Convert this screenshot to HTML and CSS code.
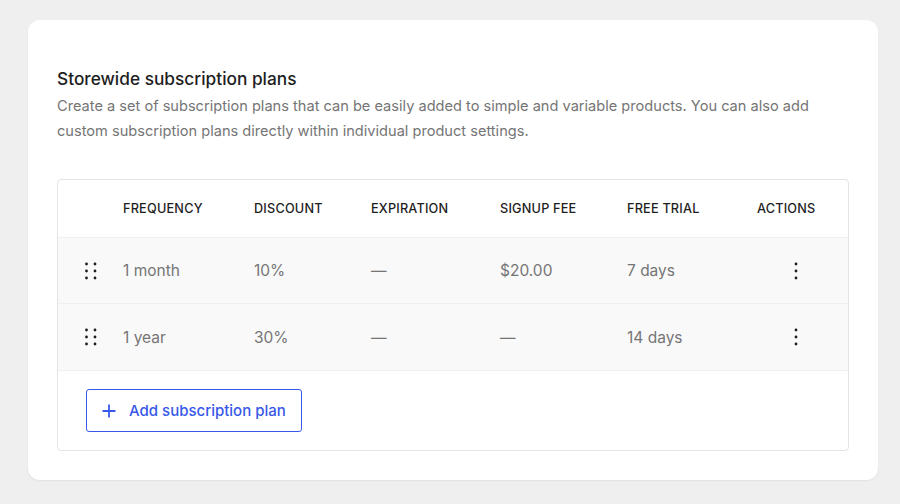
FILE: index.html
```html
<!DOCTYPE html>
<html lang="en">
<head>
<meta charset="utf-8">
<title>Storewide subscription plans</title>
<link rel="stylesheet" href="styles.css">
</head>
<body>
<div class="card">
  <h2 class="title">Storewide subscription plans</h2>
  <p class="desc">Create a set of subscription plans that can be easily added to simple and variable products. You can also add custom subscription plans directly within individual product settings.</p>
  <div class="table">
    <div class="row head">
      <div class="cell"></div>
      <div class="cell">Frequency</div>
      <div class="cell">Discount</div>
      <div class="cell">Expiration</div>
      <div class="cell">Signup fee</div>
      <div class="cell">Free trial</div>
      <div class="cell">Actions</div>
    </div>
    <div class="row body">
      <div class="cell drag"><svg width="12" height="20" viewBox="0 0 12 20"><circle cx="1.5" cy="3" r="1.4"/><circle cx="10" cy="3" r="1.4"/><circle cx="1.5" cy="10" r="1.4"/><circle cx="10" cy="10" r="1.4"/><circle cx="1.5" cy="17" r="1.4"/><circle cx="10" cy="17" r="1.4"/></svg></div>
      <div class="cell">1 month</div>
      <div class="cell">10%</div>
      <div class="cell">—</div>
      <div class="cell">$20.00</div>
      <div class="cell">7 days</div>
      <div class="cell kebab"><svg width="4" height="20" viewBox="0 0 4 20"><circle cx="2" cy="3" r="1.4"/><circle cx="2" cy="10" r="1.4"/><circle cx="2" cy="17" r="1.4"/></svg></div>
    </div>
    <div class="row body">
      <div class="cell drag"><svg width="12" height="20" viewBox="0 0 12 20"><circle cx="1.5" cy="3" r="1.4"/><circle cx="10" cy="3" r="1.4"/><circle cx="1.5" cy="10" r="1.4"/><circle cx="10" cy="10" r="1.4"/><circle cx="1.5" cy="17" r="1.4"/><circle cx="10" cy="17" r="1.4"/></svg></div>
      <div class="cell">1 year</div>
      <div class="cell">30%</div>
      <div class="cell">—</div>
      <div class="cell">—</div>
      <div class="cell">14 days</div>
      <div class="cell kebab"><svg width="4" height="20" viewBox="0 0 4 20"><circle cx="2" cy="3" r="1.4"/><circle cx="2" cy="10" r="1.4"/><circle cx="2" cy="17" r="1.4"/></svg></div>
    </div>
    <div class="foot">
      <button class="add"><svg width="14" height="14" viewBox="0 0 14 14"><path d="M7 0.5v13M0.5 7h13" stroke="currentColor" stroke-width="1.8" fill="none"/></svg><span>Add subscription plan</span></button>
    </div>
  </div>
</div>
</body>
</html>
```
FILE: styles.css
```css
* { box-sizing: border-box; }
html, body { margin: 0; }
body {
  background: #efefef;
  font-family: Inter, "Noto Sans", sans-serif;
  padding: 20px 0 0 28px;
  height: 504px;
  overflow: hidden;
}
.card {
  width: 850px;
  height: 460px;
  background: #fff;
  border-radius: 12px;
  box-shadow: 0 1px 2px rgba(0,0,0,0.06);
  padding: 47px 29px 29px 29px;
}
.title {
  margin: 0;
  font-size: 17.3px;
  line-height: 24px;
  font-weight: 500;
  color: #1e1e1e;
}
.desc {
  margin: 3px 0 0;
  font-size: 14.6px;
  line-height: 25px;
  color: #757575;
}
.table {
  margin-top: 35px;
  border: 1px solid #e4e4e4;
  border-radius: 4px;
  overflow: hidden;
}
.row {
  display: grid;
  grid-template-columns: 65px 131px 117px 129px 127px 130px 1fr;
  align-items: center;
}
.head {
  height: 57px;
  font-size: 12.7px;
  font-weight: 500;
  text-transform: uppercase;
  color: #1e1e1e;
  letter-spacing: 0.2px;
}
.body {
  background: #f9f9f9;
  border-top: 1px solid #f0f0f0;
  height: 66px;
  font-size: 15.5px;
  color: #757575;
}
.body + .body { height: 67px; }
.drag { display: flex; padding-left: 27px; }
.drag svg, .kebab svg { fill: #1e1e1e; display: block; }
.kebab { display: flex; padding-left: 37px; }
.foot {
  border-top: 1px solid #f0f0f0;
  padding: 18px 28px 18px;
}
.add {
  display: flex;
  align-items: center;
  gap: 13px;
  width: 216px;
  height: 43px;
  padding: 0 0 0 15px;
  border: 1px solid #3858e9;
  border-radius: 3px;
  background: #fff;
  color: #3858e9;
  font-family: inherit;
  font-size: 15px;
  font-weight: 500;
}
.add svg { display: block; }
```
